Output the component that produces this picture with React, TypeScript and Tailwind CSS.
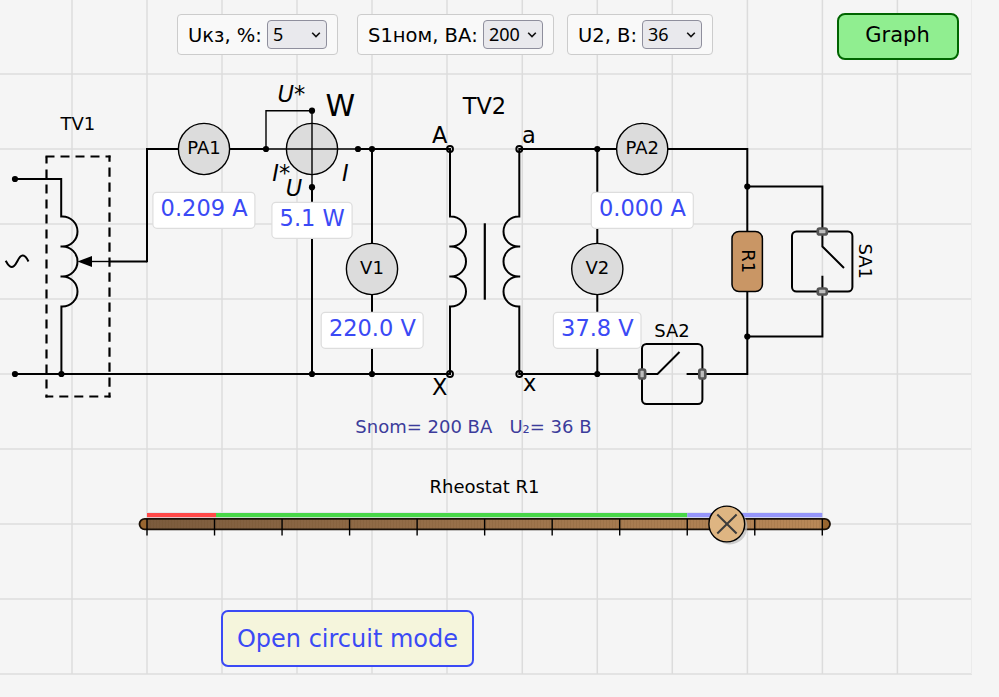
import React from "react";

const columns = [72, 147, 222, 297, 372, 447, 522.3, 597.3, 672.3, 747.4, 822.4, 897.4];
const rows = [74, 149, 224, 299, 374, 449, 524, 599, 674];

function Grid() {
  return (
    <svg className="pointer-events-none absolute inset-0" width="999" height="697" aria-hidden="true">
      <g stroke="#dcdcdc" strokeWidth="1.5">
        {columns.map((x) => (
          <line key={x} x1={x} x2={x} y1="0" y2="674" />
        ))}
        {rows.map((y) => (
          <line key={y} x1="0" x2="972" y1={y} y2={y} />
        ))}
      </g>
      <line x1="971.5" x2="971.5" y1="0" y2="674" stroke="#ebebeb" />
    </svg>
  );
}

function Picker({ label, value, options, className }: { label: string; value: string; options: string[]; className: string }) {
  return (
    <label className={`flex h-[41px] items-center justify-between rounded border border-[#cccccc] bg-[#f9f9f9] pr-[10px] pl-[10px] text-[19.5px] leading-none whitespace-nowrap ${className}`}>
      <span className="pt-[3px]">{label}</span>
      <span className="relative flex">
        <select
          defaultValue={value}
          className="h-[29px] w-[60px] appearance-none rounded border border-[#8f8f9d] bg-[#e9e9ed] pl-[5px] font-['Noto_Sans',sans-serif] text-[18px] leading-[27px]"
        >
          {options.map((o) => (
            <option key={o}>{o}</option>
          ))}
        </select>
        <svg className="pointer-events-none absolute top-[11px] right-[6px]" width="10" height="8" viewBox="0 0 10 8">
          <path d="M1.2 1.7L5 5.5L8.8 1.7" fill="none" stroke="#111" strokeWidth="1.6" />
        </svg>
      </span>
    </label>
  );
}

type LabelProps = { x: number; y: number; size?: number; italic?: boolean; width?: number; fill?: string; children: React.ReactNode };

function Label({ x, y, size = 18, italic, width, fill = "#000", children }: LabelProps) {
  return (
    <text x={x} y={y} fontSize={size} fontStyle={italic ? "italic" : "normal"} textLength={width} fill={fill} stroke="none" xmlSpace="preserve">
      {children}
    </text>
  );
}

function Meter({ x, y, name }: { x: number; y: number; name: string }) {
  return (
    <g>
      <circle cx={x} cy={y} r="25.6" fill="#dcdcdc" stroke="#000" strokeWidth="1.4" />
      <text x={x} y={y + 4.9} fontSize="18" textAnchor="middle" stroke="none">{name}</text>
    </g>
  );
}

function Readout({ x, y, width, value }: { x: number; y: number; width: number; value: string }) {
  return (
    <g>
      <rect x={x} y={y} width={width} height="36" rx="4" fill="#fff" stroke="#dddddd" strokeWidth="1.2" />
      <text x={x + width / 2 + 0.2} y={y + 23.7} fontSize="22.5" textAnchor="middle" fill="#3b4af5" stroke="none">{value}</text>
    </g>
  );
}

const nodes = [
  [15, 179], [15, 374], [61.4, 374], [266, 149], [312, 110.7], [312, 187.2], [358, 149], [372, 149],
  [312, 374], [372, 374], [597.3, 149], [597.3, 374], [747.3, 186.5], [747.3, 336.5],
];
const openNodes = [[450, 149], [519.3, 149], [450, 374], [519.3, 374]];
const ticks = Array.from({ length: 11 }, (_, i) => 147 + i * 67.53);

function Terminal({ x, y, vertical }: { x: number; y: number; vertical?: boolean }) {
  const w = vertical ? 6 : 9;
  const h = vertical ? 9 : 6;
  return <rect x={x - w / 2} y={y - h / 2} width={w} height={h} rx="1.8" fill="#bdbdbd" stroke="#555" strokeWidth="2.7" />;
}

function Rheostat() {
  return (
    <g>
      <defs>
        <linearGradient id="track" x1="0" x2="1">
          <stop offset="0" stopColor="#7b5b3d" />
          <stop offset="1" stopColor="#b98858" />
        </linearGradient>
        <pattern id="winding" width="3" height="10" patternUnits="userSpaceOnUse">
          <rect width="1" height="10" fill="#5a3a18" opacity="0.1" />
        </pattern>
      </defs>
      <Label x={429.5} y={493} width={110}>Rheostat R1</Label>
      <rect x="147" y="512.2" width="675.3" height="6" fill="#dfe3ea" />
      <rect x="147" y="513" width="69" height="4.2" fill="#ff4848" />
      <rect x="216" y="513" width="471.3" height="4.2" fill="#48d748" />
      <rect x="687.3" y="513" width="135" height="4.2" fill="#9696fa" />
      <rect x="139.5" y="518.9" width="690.5" height="10.4" rx="5.2" fill="#996630" />
      <rect x="147" y="519" width="675.3" height="10" fill="url(#track)" />
      <rect x="147" y="519" width="675.3" height="10" fill="url(#winding)" />
      <rect x="139.5" y="518.9" width="690.5" height="10.4" rx="5.2" fill="none" stroke="#1a1008" strokeWidth="1.8" />
      {ticks.map((x) => (
        <line key={x} x1={x} x2={x} y1="519" y2="535.5" stroke="#000" strokeWidth="1.4" />
      ))}
      <circle cx="729.6" cy="526.6" r="17.8" fill="#bbb" opacity="0.7" />
      <circle cx="726.8" cy="524" r="17.9" fill="#deb582" stroke="#000" strokeWidth="1.4" />
      <path d="M717.3 514.5L736.6 533.5M736.6 514.5L717.3 533.5" stroke="#3b3b3b" strokeWidth="2" />
    </g>
  );
}

function Circuit() {
  return (
    <svg className="relative block" width="999" height="548" viewBox="0 62 999 548">
      <g fill="none" stroke="#000" strokeWidth="2.2">
        <path d="M15 179H61.2V216.5H62.5a15 15 0 0 1 0 30H60.5H62.5a15 15 0 0 1 0 30H60.5H62.5a15 15 0 0 1 0 30H61.4V374" strokeWidth="2" />
        <path d="M147 261.5H109" />
        <path d="M109 261.5H90" strokeWidth="1.4" />
        <path d="M77.5 261.5L92 256V267Z" fill="#000" stroke="none" />
        <path d="M147 262.3V149H266M358 149H450V216.5H451a15 15 0 0 1 0 30H449.3H451a15 15 0 0 1 0 30H449.3H451a15 15 0 0 1 0 30H450V374H15" strokeWidth="2" />
        <path d="M312 187V374M372 149V374M597.3 149V374" strokeWidth="2" />
        <path d="M642 374H519.3V306.5H518.5a15 15 0 0 1 0-30H520.2H518.5a15 15 0 0 1 0-30H520.2H518.5a15 15 0 0 1 0-30H519.3V149H747.3V374H702" strokeWidth="2" />
        <path d="M747.3 186.5H822.4V231M822.4 292V336.5H747.3" strokeWidth="2" />
        <path d="M484.8 223.3V299.7" strokeWidth="2.2" />
        <path d="M46.5 156.5V397.5" strokeDasharray="9 6" strokeDashoffset="2" />
        <path d="M45.5 156.5H110.5" strokeDasharray="9 6" />
        <path d="M109.5 155.5V397.5" strokeDasharray="9.3 5.7" strokeDashoffset="3" />
        <path d="M45.5 396.5H110.5" strokeDasharray="9 6" strokeDashoffset="1.2" />
        <path d="M5.7 260.7C8.5 266 11 268.5 14 266C17.5 263 18.5 256 22.5 255.6C25.2 255.4 27 258.5 28.5 261.5" strokeWidth="2" />
      </g>

      <g>
        <circle cx="312" cy="149" r="25.6" fill="#dcdcdc" stroke="#000" strokeWidth="1.4" />
        <path d="M266 149V110.7H312V187M266 149H358" fill="none" stroke="#000" strokeWidth="1.4" />
        <Meter x={204} y={149} name="PA1" />
        <Meter x={372} y={269} name="V1" />
        <Meter x={642.2} y={149} name="PA2" />
        <Meter x={597.3} y={269} name="V2" />
      </g>

      {nodes.map(([x, y]) => (
        <circle key={`${x}-${y}`} cx={x} cy={y} r="3.1" />
      ))}
      {openNodes.map(([x, y]) => (
        <circle key={`${x}-${y}`} cx={x} cy={y} r="3" fill="none" stroke="#000" strokeWidth="1.9" />
      ))}

      <g fill="none" stroke="#000" strokeWidth="2">
        <rect x="732" y="231.5" width="30.4" height="60" rx="7" fill="#c99665" strokeWidth="1.5" />
        <rect x="792" y="231.5" width="60.4" height="60" rx="4.5" />
        <path d="M822.4 231V246.5L844 268M822.4 275.7V292" />
        <rect x="642" y="344" width="60.4" height="60" rx="4.5" />
        <path d="M642 374H657.5L679.5 352M686.6 374H702" />
      </g>
      <Terminal x={822.3} y={231.5} />
      <Terminal x={822.3} y={291.5} />
      <Terminal x={642.1} y={374} vertical />
      <Terminal x={702.3} y={374} vertical />

      <Label x={60.5} y={129.7}>TV1</Label>
      <Label x={462.7} y={113.7} size={22.5}>TV2</Label>
      <Label x={277.6} y={101.7} size={22.5} italic>U*</Label>
      <Label x={325.5} y={115.5} size={30}>W</Label>
      <Label x={272.3} y={180.8} size={22.5} italic>I*</Label>
      <Label x={285.8} y={195.8} size={22.5} italic>U</Label>
      <Label x={342} y={180.8} size={22.5} italic>I</Label>
      <Label x={431.9} y={143} size={22.5}>A</Label>
      <Label x={521.9} y={142.7} size={22.5}>a</Label>
      <Label x={431.9} y={394.8} size={22.5}>X</Label>
      <Label x={523} y={390.7} size={22.5}>x</Label>
      <Label x={654.3} y={336.7}>SA2</Label>
      <g transform="translate(742.3 249.3) rotate(90)"><Label x={0} y={0}>R1</Label></g>
      <g transform="translate(859.3 243.5) rotate(90)"><Label x={0} y={0}>SA1</Label></g>

      <Readout x={152.9} y={192.3} width={102} value="0.209 A" />
      <Readout x={271.9} y={202.3} width={80.2} value="5.1 W" />
      <Readout x={321.2} y={312.3} width={102} value="220.0 V" />
      <Readout x={591.3} y={192.3} width={102} value="0.000 A" />
      <Readout x={553.4} y={312.3} width={87.6} value="37.8 V" />

      <Label x={355.3} y={432.7} fill="#3c3c9b">Snom= 200 BA</Label>
      <Label x={509.4} y={432.7} fill="#3c3c9b">U₂= 36 B</Label>
      <Rheostat />
    </svg>
  );
}

export default function App() {
  return (
    <main className="relative h-[697px] w-[999px] overflow-hidden bg-[#f5f5f5] font-['DejaVu_Sans',sans-serif] text-black">
      <Grid />
      <header className="relative flex h-[62px] items-start pt-[13.5px] pl-[177px]">
        <div className="flex gap-x-[19px]">
          <Picker label="Uкз, %:" value="5" options={["5", "10"]} className="w-[161px]" />
          <Picker label="S1ном, ВА:" value="200" options={["100", "200"]} className="w-[197px]" />
        </div>
        <Picker label="U2, В:" value="36" options={["24", "36"]} className="ml-[13px] w-[146px]" />
        <button className="-mt-px ml-[123.5px] h-[47px] w-[122px] rounded-[8px] border-2 border-[#006400] bg-[#90ee90] pb-px text-[21px] leading-none">Graph</button>
      </header>
      <Circuit />
      <footer className="relative flex pl-[221px]">
        <button className="h-[57px] w-[253px] rounded-[7px] border-2 border-[#3b4af5] bg-[#f5f5dc] text-[24px] leading-none text-[#3b4af5]">Open circuit mode</button>
      </footer>
    </main>
  );
}
